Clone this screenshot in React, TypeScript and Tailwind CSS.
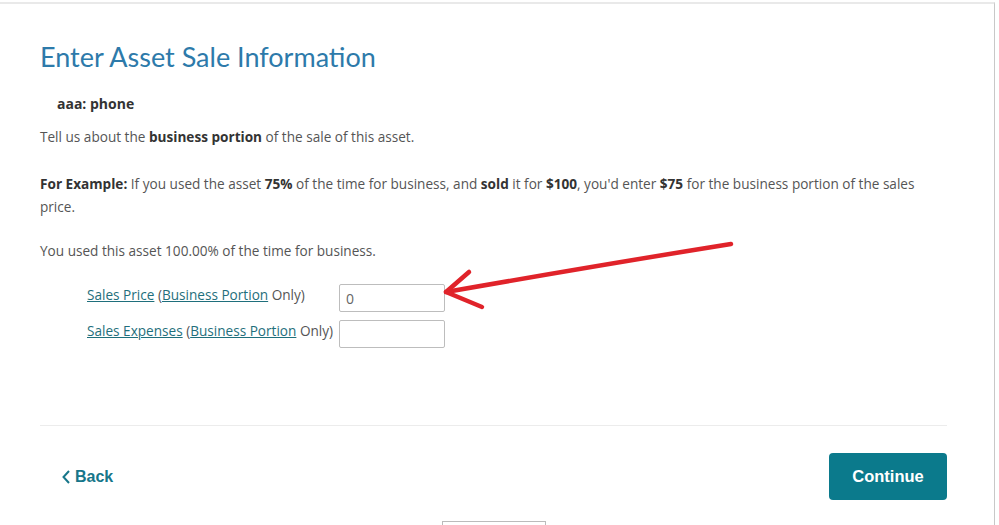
import React from "react";

export default function App() {
  const body = { fontFamily: "'Open Sans', Lato, sans-serif" };
  const heading = { fontFamily: "Lato, 'Open Sans', sans-serif" };
  const arial = { fontFamily: "'Liberation Sans', Arial, sans-serif" };
  return (
    <div className="relative w-[999px] h-[525px] overflow-hidden bg-white" style={body}>
      <div className="h-[2px]" />
      <div className="w-[995px] h-[523px] border-t-2 border-r border-t-[#e9e9e9] border-r-[#c8c8c8]">
        <div className="pl-[40px] pr-[47px]">
          <h1 className="pt-[36px] text-[27px] leading-[34px] text-[#2d7aaa] font-normal" style={heading}>
            Enter Asset Sale Information
          </h1>
          <div className="mt-[20px] pl-[17px] text-[14px] leading-[20px] font-bold text-[#333]">aaa: phone</div>
          <p className="mt-[13px] text-[13.6px] leading-[20px] text-[#555]">
            Tell us about the <b className="text-[#333]">business portion</b> of the sale of this asset.
          </p>
          <p className="mt-[25px] text-[13.6px] leading-[23px] text-[#555]">
            <b className="text-[#333]">For Example:</b> If you used the asset <b className="text-[#333]">75%</b> of the
            time for business, and <b className="text-[#333]">sold</b> it for <b className="text-[#333]">$100</b>,
            you'd enter <b className="text-[#333]">$75</b> for the business portion of the sales price.
          </p>
          <p className="mt-[23px] text-[13.6px] leading-[20px] text-[#555]">
            You used this asset 100.00% of the time for business.
          </p>
          <div className="mt-[23px] pl-[47px] flex flex-col gap-[8px] text-[13.6px] text-[#555]">
            <div className="flex items-center">
              <div className="w-[252px] -mt-[6px]">
                <a className="underline text-[#1f6f7c]">Sales Price</a> (
                <a className="underline text-[#1f6f7c]">Business Portion</a> Only)
              </div>
              <div className="w-[106px] h-[28px] border border-[#bdbdbd] rounded-[2px] flex items-center pl-[6px] text-[#666] text-[14px]">
                0
              </div>
            </div>
            <div className="flex items-center">
              <div className="w-[252px] -mt-[6px]">
                <a className="underline text-[#1f6f7c]">Sales Expenses</a> (
                <a className="underline text-[#1f6f7c]">Business Portion</a> Only)
              </div>
              <div className="w-[106px] h-[28px] border border-[#bdbdbd] rounded-[2px]" />
            </div>
          </div>
          <div className="mt-[77px] border-t border-[#ececec]" />
          <div className="mt-[27px] flex items-center justify-between" style={arial}>
            <button className="ml-[21px] flex items-center gap-[3px] text-[16px] font-bold text-[#17768a]">
              <svg width="11" height="16" viewBox="0 0 11 16">
                <path d="M8 2 L2.5 8 L8 14" fill="none" stroke="#17768a" strokeWidth="2" />
              </svg>
              Back
            </button>
            <button className="w-[118px] h-[47px] rounded-[4px] bg-[#0b7a8c] text-white text-[16.5px] font-bold">
              Continue
            </button>
          </div>
          <div className="mt-[21px] ml-[402px] w-[104px] h-[10px] border border-b-0 border-[#bbb]" />
        </div>
      </div>
      <svg className="absolute left-0 top-0 pointer-events-none" width="999" height="525">
        <path
          d="M731 244 Q600 265 446 292"
          fill="none"
          stroke="#e0232a"
          strokeWidth="4.5"
          strokeLinecap="round"
        />
        <path
          d="M469 272 L446 292 L482 307"
          fill="none"
          stroke="#e0232a"
          strokeWidth="4.5"
          strokeLinecap="round"
          strokeLinejoin="round"
        />
      </svg>
    </div>
  );
}
